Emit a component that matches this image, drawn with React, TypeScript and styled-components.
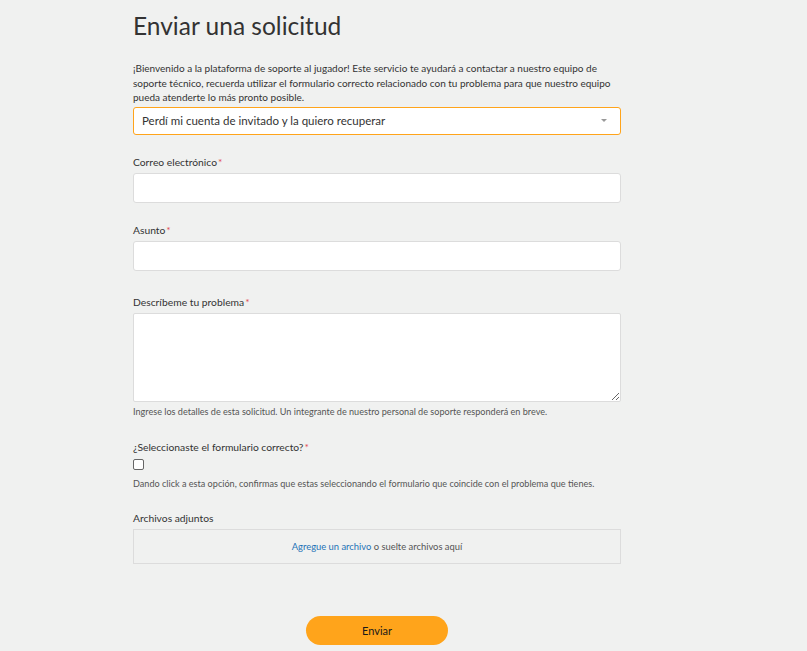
import styled, { createGlobalStyle } from "styled-components";

const GlobalStyle = createGlobalStyle`
  html, body {
    margin: 0;
    padding: 0;
    background: #f0f1f0;
  }
  body {
    font-family: Lato, "Open Sans", sans-serif;
    color: #333;
  }
`;

// 항목 하나 (라벨 + 입력)
const Field = ({
  label,
  required,
  gap = 20,
  children,
}: {
  label: string;
  required?: boolean;
  gap?: number;
  children: React.ReactNode;
}) => {
  return (
    <StyledField $gap={gap}>
      <StyledLabel>
        {label}
        {required && <StyledStar>*</StyledStar>}
      </StyledLabel>
      {children}
    </StyledField>
  );
};

const App = () => {
  return (
    <>
      <GlobalStyle />
      <StyledPage>
        <StyledTitle>Enviar una solicitud</StyledTitle>
        <StyledIntro>
          ¡Bienvenido a la plataforma de soporte al jugador! Este servicio te
          ayudará a contactar a nuestro equipo de soporte técnico, recuerda
          utilizar el formulario correcto relacionado con tu problema para que
          nuestro equipo pueda atenderte lo más pronto posible.
        </StyledIntro>
        <StyledSelect>
          <span>Perdí mi cuenta de invitado y la quiero recuperar</span>
          <StyledCaret />
        </StyledSelect>

        <Field label="Correo electrónico" required>
          <StyledInput type="email" />
        </Field>

        <Field label="Asunto" required>
          <StyledInput type="text" />
        </Field>

        <Field label="Descríbeme tu problema" required gap={24}>
          <StyledTextarea />
          <StyledHint $gap={3}>
            Ingrese los detalles de esta solicitud. Un integrante de nuestro
            personal de soporte responderá en breve.
          </StyledHint>
        </Field>

        <Field label="¿Seleccionaste el formulario correcto?" required gap={21}>
          <StyledCheckbox type="checkbox" />
          <StyledHint $gap={7}>
            Dando click a esta opción, confirmas que estas seleccionando el
            formulario que coincide con el problema que tienes.
          </StyledHint>
        </Field>

        <Field label="Archivos adjuntos">
          <StyledDropzone>
            <StyledLink href="#">Agregue un archivo</StyledLink>&nbsp;o suelte
            archivos aquí
          </StyledDropzone>
        </Field>

        <StyledFooter>
          <StyledButton type="button">Enviar</StyledButton>
        </StyledFooter>
      </StyledPage>
    </>
  );
};

export default App;

const StyledPage = styled.div`
  width: 488px;
  margin: 0 0 0 133px;
  padding: 10px 0 7px 0;
  display: flex;
  flex-direction: column;
`;

const StyledTitle = styled.h1`
  margin: 0;
  font-size: 24.5px;
  font-weight: 400;
  line-height: 31px;
  color: #333;
`;

const StyledIntro = styled.p`
  margin: 20px 0 2px 0;
  font-size: 10px;
  line-height: 14.5px;
  color: #333;
`;

const StyledSelect = styled.div`
  height: 28px;
  box-sizing: border-box;
  border: 1px solid #ffa41b;
  border-radius: 3px;
  background: #fff;
  padding: 0 13px 0 8px;
  display: flex;
  align-items: center;
  justify-content: space-between;
  font-size: 11.5px;
  color: #333;
`;

const StyledCaret = styled.span`
  width: 0;
  height: 0;
  border-left: 3px solid transparent;
  border-right: 3px solid transparent;
  border-top: 3px solid #999;
`;

const StyledField = styled.div<{ $gap: number }>`
  margin-top: ${(p) => p.$gap}px;
  display: flex;
  flex-direction: column;
`;

const StyledLabel = styled.label`
  font-size: 10.3px;
  line-height: 14px;
  margin-bottom: 4px;
  color: #333;
`;

const StyledStar = styled.span`
  color: #e34f55;
  margin-left: 1px;
`;

const StyledInput = styled.input`
  height: 30px;
  box-sizing: border-box;
  border: 1px solid #dcdcdc;
  border-radius: 3px;
  background: #fff;
  margin: 0;
  outline: none;
`;

const StyledTextarea = styled.textarea`
  height: 89px;
  box-sizing: border-box;
  border: 1px solid #dcdcdc;
  border-radius: 2px;
  background: #fff;
  margin: 0;
  outline: none;
  display: block;
`;

const StyledHint = styled.div<{ $gap: number }>`
  font-size: 9.1px;
  line-height: 14px;
  color: #555;
  margin-top: ${(p) => p.$gap}px;
`;

const StyledCheckbox = styled.input`
  appearance: none;
  width: 11px;
  height: 11px;
  margin: 1px 0 0 0;
  border: 1px solid #666;
  border-radius: 2px;
  background: #fff;
`;

const StyledDropzone = styled.div`
  height: 35px;
  box-sizing: border-box;
  border: 1px solid #dcdcdc;
  background: #f0f1f0;
  display: flex;
  align-items: center;
  justify-content: center;
  font-size: 9.4px;
  color: #555;
`;

const StyledLink = styled.a`
  color: #1f73b7;
  text-decoration: none;
`;

const StyledFooter = styled.div`
  display: flex;
  justify-content: center;
  margin-top: 52px;
`;

const StyledButton = styled.button`
  width: 142px;
  height: 29px;
  border: none;
  border-radius: 15px;
  background: #ffa41b;
  color: #1a1a1a;
  font-family: Lato, "Open Sans", sans-serif;
  font-size: 11px;
  font-weight: 400;
  cursor: pointer;
`;
